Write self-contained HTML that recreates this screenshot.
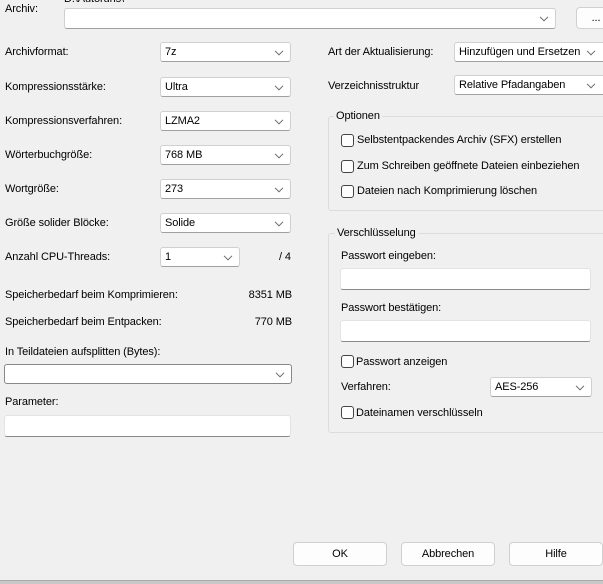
<!DOCTYPE html>
<html><head><meta charset="utf-8"><style>
*{box-sizing:border-box;margin:0;padding:0}
html,body{width:603px;height:584px;overflow:hidden;background:#f0f0f0;font-family:"Liberation Sans",sans-serif;font-size:11px;letter-spacing:-0.1px;color:#000}
.a{position:absolute;white-space:nowrap;line-height:14px}
.cb{position:absolute;height:20px;background:#fff;border:1px solid #d0d0d0;border-bottom-color:#a0a0a0;border-radius:3px;padding-left:4px;line-height:18px;white-space:nowrap;overflow:hidden}
.cb svg{position:absolute;right:6px;top:7px}
.in{position:absolute;background:#fff;border:1px solid #e3e3e3;border-bottom:1px solid #888;border-radius:3px}
.grp{position:absolute;border:1px solid #dcdcdc;border-radius:3px}
.gt{position:absolute;background:#f0f0f0;padding:0 2px;line-height:14px}
.chk{position:absolute;width:13px;height:13px;border:1px solid #444;border-radius:3px;background:#fdfdfd}
.btn{position:absolute;height:24px;background:#fdfdfd;border:1px solid #d0d0d0;border-radius:4px;text-align:center;line-height:22px}
</style></head><body>
<svg width="0" height="0" style="position:absolute"><defs><symbol id="ar" viewBox="0 0 10 6"><path d="M1 0.8L5 4.8L9 0.8" fill="none" stroke="#666" stroke-width="1"/></symbol></defs></svg>

<div class="a" style="left:5px;top:2px">Archiv:</div>
<div class="a" style="left:64px;top:-8px">D:\Autoruns\</div>
<div class="cb" style="left:64px;top:8px;width:492px;height:21px"><svg width="10" height="6"><use href="#ar"/></svg></div>
<div class="btn" style="left:576px;top:7px;width:40px;height:22px;line-height:20px">...</div>

<div class="a" style="left:5px;top:45px">Archivformat:</div>
<div class="cb" style="left:160px;top:42px;width:131px">7z<svg width="10" height="6"><use href="#ar"/></svg></div>
<div class="a" style="left:5px;top:80px">Kompressionsstärke:</div>
<div class="cb" style="left:160px;top:77px;width:131px">Ultra<svg width="10" height="6"><use href="#ar"/></svg></div>
<div class="a" style="left:5px;top:114px">Kompressionsverfahren:</div>
<div class="cb" style="left:160px;top:111px;width:131px">LZMA2<svg width="10" height="6"><use href="#ar"/></svg></div>
<div class="a" style="left:5px;top:148px">Wörterbuchgröße:</div>
<div class="cb" style="left:160px;top:145px;width:131px">768 MB<svg width="10" height="6"><use href="#ar"/></svg></div>
<div class="a" style="left:5px;top:182px">Wortgröße:</div>
<div class="cb" style="left:160px;top:179px;width:131px">273<svg width="10" height="6"><use href="#ar"/></svg></div>
<div class="a" style="left:5px;top:216px">Größe solider Blöcke:</div>
<div class="cb" style="left:160px;top:213px;width:131px">Solide<svg width="10" height="6"><use href="#ar"/></svg></div>
<div class="a" style="left:5px;top:250px">Anzahl CPU-Threads:</div>
<div class="cb" style="left:160px;top:247px;width:80px">1<svg width="10" height="6"><use href="#ar"/></svg></div>
<div class="a" style="left:279px;top:250px">/ 4</div>

<div class="a" style="left:5px;top:288px">Speicherbedarf beim Komprimieren:</div>
<div class="a" style="right:311px;top:288px">8351 MB</div>
<div class="a" style="left:5px;top:315px">Speicherbedarf beim Entpacken:</div>
<div class="a" style="right:311px;top:315px">770 MB</div>

<div class="a" style="left:5px;top:345px">In Teildateien aufsplitten (Bytes):</div>
<div class="cb" style="left:4px;top:364px;width:288px;border-color:#888"><svg width="10" height="6"><use href="#ar"/></svg></div>
<div class="a" style="left:5px;top:395px">Parameter:</div>
<div class="in" style="left:4px;top:415px;width:287px;height:22px"></div>

<div class="a" style="left:328px;top:45px">Art der Aktualisierung:</div>
<div class="cb" style="left:454px;top:42px;width:160px">Hinzufügen und Ersetzen<svg width="10" height="6" style="right:17px"><use href="#ar"/></svg></div>
<div class="a" style="left:328px;top:79px">Verzeichnisstruktur</div>
<div class="cb" style="left:454px;top:75px;width:160px">Relative Pfadangaben<svg width="10" height="6" style="right:17px"><use href="#ar"/></svg></div>

<div class="grp" style="left:328px;top:116px;width:290px;height:95px"></div>
<div class="gt" style="left:334px;top:109px">Optionen</div>
<div class="chk" style="left:341px;top:134px"></div><div class="a" style="left:357px;top:133px">Selbstentpackendes Archiv (SFX) erstellen</div>
<div class="chk" style="left:341px;top:160px"></div><div class="a" style="left:357px;top:159px">Zum Schreiben geöffnete Dateien einbeziehen</div>
<div class="chk" style="left:341px;top:185px"></div><div class="a" style="left:357px;top:184px">Dateien nach Komprimierung löschen</div>

<div class="grp" style="left:328px;top:233px;width:290px;height:200px"></div>
<div class="gt" style="left:335px;top:226px">Verschlüsselung</div>
<div class="a" style="left:341px;top:249px">Passwort eingeben:</div>
<div class="in" style="left:340px;top:268px;width:251px;height:22px"></div>
<div class="a" style="left:341px;top:301px">Passwort bestätigen:</div>
<div class="in" style="left:340px;top:320px;width:251px;height:22px"></div>
<div class="chk" style="left:341px;top:355px"></div><div class="a" style="left:356px;top:355px">Passwort anzeigen</div>
<div class="a" style="left:341px;top:380px">Verfahren:</div>
<div class="cb" style="left:490px;top:377px;width:102px">AES-256<svg width="10" height="6"><use href="#ar"/></svg></div>
<div class="chk" style="left:341px;top:406px"></div><div class="a" style="left:356px;top:406px">Dateinamen verschlüsseln</div>

<div class="btn" style="left:293px;top:542px;width:94px">OK</div>
<div class="btn" style="left:401px;top:542px;width:94px">Abbrechen</div>
<div class="btn" style="left:509px;top:542px;width:94px">Hilfe</div>

<div style="position:absolute;left:0;top:580px;width:603px;height:1px;background:#a8a8a8"></div>
<div style="position:absolute;left:0;top:581px;width:603px;height:3px;background:#c8c8c8"></div>
</body></html>
